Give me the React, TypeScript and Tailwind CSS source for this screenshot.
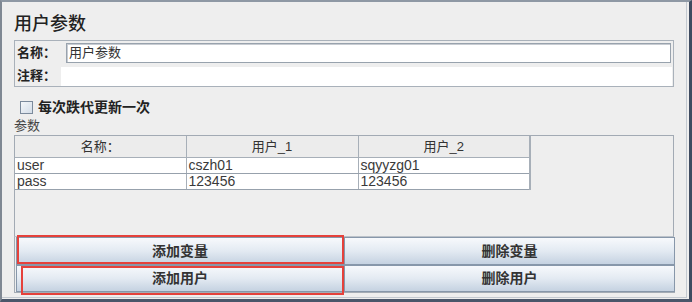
import React from 'react';

const font = "font-['Liberation_Sans','Noto_Sans_CJK_SC',sans-serif]";

const rows = [
  ['user', 'cszh01', 'sqyyzg01'],
  ['pass', '123456', '123456'],
];

function Btn({ label }: { label: string }) {
  return (
    <div className="h-full flex items-center justify-center border border-[#8797aa] bg-gradient-to-b from-[#f7f9fc] via-[#e3eaf2] to-[#c5d2e1] text-[14px] font-bold text-[#333]">
      {label}
    </div>
  );
}

export default function App() {
  return (
    <div className={`relative w-[692px] h-[302px] bg-[#eeeeee] overflow-hidden ${font}`}>
      <div className="w-full h-full border-t-2 border-l-2 border-t-[#8e98a4] border-l-[#7f8893] border-r-[3px] border-b-[3px] border-r-[#3e4b60] border-b-[#4a566a]">
        <div className="h-[296px] mr-[2px] border-r border-b border-[#c3c9d0] pl-[12px]">
          {/* Title */}
          <div className="h-[38px] pt-[10px] text-[18px] leading-[24px] font-medium text-[#222]">用户参数</div>

          {/* Name / comment */}
          <div className="w-[660px] h-[47px] border border-[#a9b1ba]">
            <div className="flex items-center h-[22px] pt-[1px]">
              <span className="w-[51px] pl-[2px] text-[13px] font-bold text-[#222]">名称：</span>
              <div className="w-[605px] h-[20px] border border-[#98a2ad] shadow-[inset_1px_1px_0_#c8ccd2] bg-white flex items-center pl-[2px] text-[13px] text-[#333]">
                用户参数
              </div>
            </div>
            <div className="flex items-center h-[23px] pt-[3px]">
              <span className="w-[46px] pl-[2px] text-[13px] font-bold text-[#222]">注释：</span>
              <div className="w-[611px] h-[19px] bg-white" />
            </div>
          </div>

          {/* Checkbox */}
          <div className="flex items-center gap-[5px] pl-[6px] mt-[13px] h-[14px]">
            <div className="w-[13px] h-[13px] border border-[#7b8a9c] bg-gradient-to-br from-[#f4f7fa] to-[#d3dde8]" />
            <span className="text-[14px] font-bold text-[#222]">每次跌代更新一次</span>
          </div>

          {/* Params label */}
          <div className="mt-[3px] h-[18px] leading-[18px] text-[13px] text-[#444]">参数</div>

          {/* Table pane */}
          <div className="w-[660px] h-[102px] border border-[#a2aab4] border-b-[#bcc2c9]">
            <table className="border-collapse text-[13px] text-[#3a3a3a]">
              <thead>
                <tr className="h-[21px]">
                  <th className="w-[171px] p-0 font-normal bg-[#ececec] border-r border-b border-[#a7afb8] text-[#333]">名称：</th>
                  <th className="w-[172px] p-0 font-normal bg-[#ececec] border-r border-b border-[#a7afb8] text-[#333]">用户_1</th>
                  <th className="w-[172px] p-0 font-normal bg-[#ececec] border-r-2 border-b border-[#a7afb8] text-[#333]">用户_2</th>
                </tr>
              </thead>
              <tbody>
                {rows.map((r) => (
                  <tr key={r[0]} className="h-[16px]">
                    {r.map((c, i) => (
                      <td
                        key={i}
                        className={`p-0 pl-[2px] leading-[14px] text-[14px] bg-white border-b border-[#97a1ac] ${i === 2 ? 'border-r-2' : 'border-r'} border-r-[#a7afb8]`}
                      >
                        {c}
                      </td>
                    ))}
                  </tr>
                ))}
              </tbody>
            </table>
          </div>

          {/* Buttons */}
          <div className="w-[661px] h-[56px] border-l border-b border-[#a4acb5] pl-[1px] grid grid-cols-[328px_331px] grid-rows-[28px_27px]">
            <Btn label="添加变量" />
            <Btn label="删除变量" />
            <Btn label="添加用户" />
            <Btn label="删除用户" />
          </div>
        </div>
      </div>

      {/* Red annotation boxes */}
      <div className="absolute left-[17px] top-[235px] w-[327px] h-[29px] border-2 border-[#e5413b]" />
      <div className="absolute left-[21px] top-[266px] w-[323px] h-[29px] border-2 border-[#e5413b]" />
    </div>
  );
}
